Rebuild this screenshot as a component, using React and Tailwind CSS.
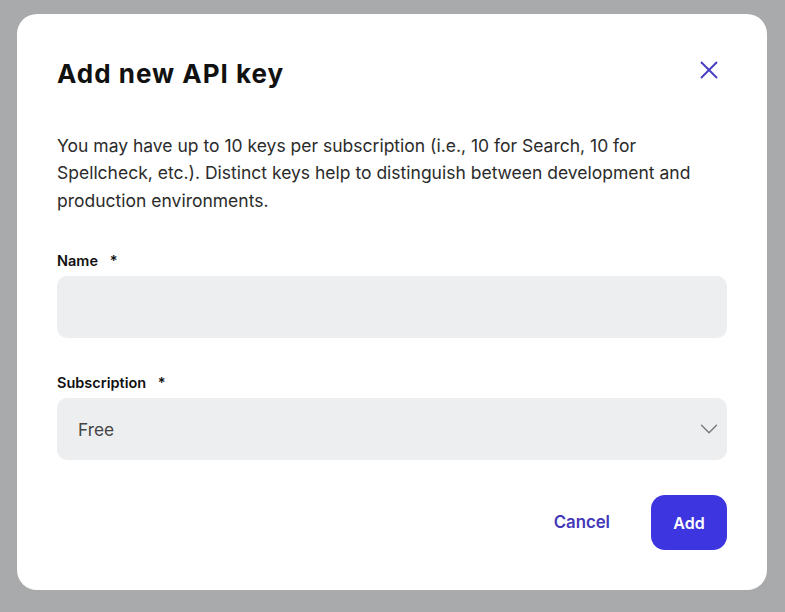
import { X, ChevronDown } from "lucide-react";

export default function App() {
  return (
    <div
      className="min-h-screen w-full bg-[#a9aaab] pt-[14px] pl-[17px]"
      style={{ fontFamily: "Inter, 'Noto Sans', sans-serif" }}
    >
      <div className="w-[750px] h-[576px] bg-white rounded-[20px] px-10 pt-10 pb-10 flex flex-col">
        <div className="flex items-center justify-between h-10">
          <h2 className="text-[26px] font-bold text-[#111] tracking-[1px]">Add new API key</h2>
          <button className="text-[#4a3fc4] mr-[3px] -mt-[8px]">
            <X size={30} strokeWidth={1.5} />
          </button>
        </div>

        <p className="mt-[38px] max-w-[664px] text-[17.5px] leading-[27.5px] text-[#2b2b2b]">
          You may have up to 10 keys per subscription (i.e., 10 for Search, 10 for
          Spellcheck, etc.). Distinct keys help to distinguish between development and
          production environments.
        </p>

        <label className="mt-[38px] text-[14.5px] font-semibold text-[#111] leading-[18px]">
          Name <span className="ml-[8px]">*</span>
        </label>
        <input className="mt-[6px] h-[62px] w-full rounded-[10px] bg-[#eceef0] outline-none px-5" />

        <label className="mt-[36px] text-[14.5px] font-semibold text-[#111] leading-[18px]">
          Subscription <span className="ml-[8px]">*</span>
        </label>
        <div className="mt-[6px] h-[62px] w-full rounded-[10px] bg-[#eceef0] flex items-center justify-between pl-[21px] pr-[3px]">
          <span className="text-[17.3px] text-[#444] mt-[2px]">Free</span>
          <ChevronDown size={30} strokeWidth={1.1} className="text-[#777]" />
        </div>

        <div className="mt-[35px] flex items-center justify-end gap-[41px]">
          <button className="text-[16.8px] font-semibold text-[#4338b8]">Cancel</button>
          <button className="h-[55px] w-[76px] rounded-[14px] bg-[#3d35e0] text-white text-[16px] font-semibold">
            Add
          </button>
        </div>
      </div>
    </div>
  );
}
